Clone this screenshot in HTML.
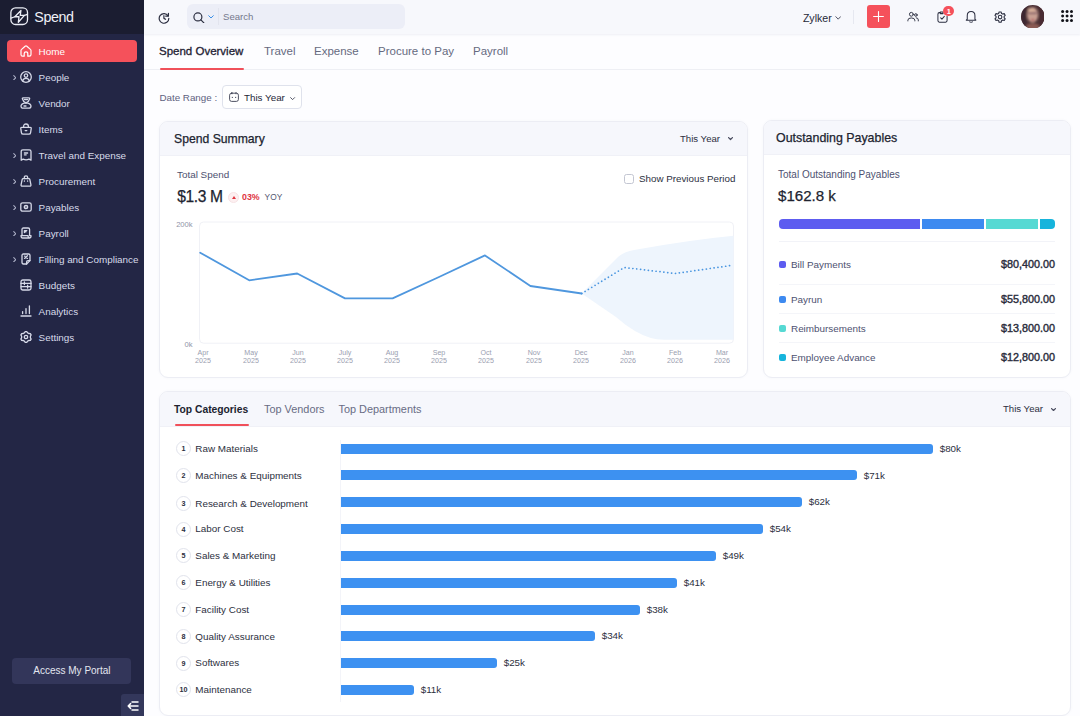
<!DOCTYPE html>
<html lang="en"><head><meta charset="utf-8"><title>Spend</title>
<style>
*{box-sizing:border-box;margin:0;padding:0}
html,body{width:1080px;height:716px;overflow:hidden;background:#fdfdff;font-family:"Liberation Sans",sans-serif;color:#2a2d3e}
.abs{position:absolute}
#side{position:absolute;left:0;top:0;width:144px;height:716px;background:#232645}
#side .hd{position:absolute;left:0;top:0;width:144px;height:33.5px;background:#1b1d31}
#side .brand{position:absolute;left:34.3px;top:8.4px;font-size:14.3px;letter-spacing:-0.45px;color:#f0f1f7;line-height:19px}
.nav{position:absolute;left:7px;width:130px;height:22px;border-radius:4px;color:#d8dbea;font-size:9.9px;line-height:22px}
.nav.act{background:#f5515b;color:#fff}
.nav span{position:absolute;left:31.6px;top:1.1px;white-space:nowrap}
.nav svg.ic{position:absolute;left:13px;top:5px;width:12px;height:12px}
.nav svg.ch{position:absolute;left:5.8px;top:8.8px;width:3.6px;height:5.4px}
#portal{position:absolute;left:12.4px;top:657.7px;width:119px;height:26px;border-radius:4px;background:#33365a;color:#e4e6f0;font-size:10px;line-height:26px;text-align:center}
#collapse{position:absolute;left:121px;top:694px;width:23px;height:22px;background:#33375b;border-top-left-radius:3px}
#top{position:absolute;left:144px;top:0;width:936px;height:34px;background:#f7f8fc;box-shadow:0 1px 2px rgba(40,50,110,0.07);z-index:2}
#search{position:absolute;left:43px;top:4px;width:218px;height:25px;border-radius:6px;background:#eceef7}
#tabs{position:absolute;left:144px;top:34px;width:936px;height:36px;background:#fdfdff;border-bottom:1px solid #eeeff4}
.tab{position:absolute;top:10px;font-size:11.5px;line-height:14px;color:#666a80;white-space:nowrap}
.tab.on{color:#1f2233;-webkit-text-stroke:0.3px #1f2233}
.card{position:absolute;background:#fff;border:1px solid #ecedf4;border-radius:9px;overflow:hidden;box-shadow:0 0 3px rgba(60,70,120,0.04)}
.card .ch{position:absolute;left:0;top:0;right:0;background:#f6f7fc;border-bottom:1px solid #f0f1f7}
.t{position:absolute;white-space:nowrap}
</style></head><body>
<div id="side"><div class="hd"></div>
<svg class="abs" style="left:10.3px;top:7.4px;width:18.4px;height:18.4px" viewBox="0 0 19 19" fill="none" stroke="#eceef6" stroke-width="1.35" stroke-linejoin="round" stroke-linecap="round"><rect x="0.9" y="0.9" width="17.2" height="17.2" rx="4.8"/><path d="M11.3 3.6 L5 10.1 H9.3 L8.6 15.8 L14.9 8.7 H10.6 Z"/><path d="M1 11.5 L5 10.1 M14.9 8.7 L18 7.6" stroke-width="1.2"/></svg>
<div class="brand">Spend</div>
<div class="nav act" style="top:40px"><svg class="ic" viewBox="0 0 12 12" fill="none" stroke="#fff" stroke-width="1.2" stroke-linejoin="round" stroke-linecap="round"><path d="M1 5.6 Q1 4.9 1.6 4.4 L5.1 1.3 Q6 0.6 6.9 1.3 L10.4 4.4 Q11 4.9 11 5.6 V9.6 Q11 11.2 9.4 11.2 H7.8 V8.4 Q7.8 6.8 6 6.8 Q4.2 6.8 4.2 8.4 V11.2 H2.6 Q1 11.2 1 9.6 Z"/></svg><span>Home</span></div>
<div class="nav" style="top:66px"><svg class="ch" viewBox="0 0 5 8" fill="none" stroke="#aeb2c8" stroke-width="1.6" stroke-linecap="round" stroke-linejoin="round"><path d="M1 1 L4 4 L1 7"/></svg><svg class="ic" viewBox="0 0 12 12" fill="none" stroke="#d6d9e8" stroke-width="1.3" stroke-linejoin="round" stroke-linecap="round"><circle cx="6" cy="6" r="5.3"/><circle cx="6" cy="4.6" r="1.7"/><path d="M2.6 10 Q3.2 7.4 6 7.4 Q8.8 7.4 9.4 10"/></svg><span>People</span></div>
<div class="nav" style="top:92px"><svg class="ic" viewBox="0 0 12 12" fill="none" stroke="#d6d9e8" stroke-width="1.3" stroke-linejoin="round" stroke-linecap="round"><path d="M3 0.9 H9 Q9.8 0.9 9.6 1.8 Q9 4.6 6 5.8 Q3 4.6 2.4 1.8 Q2.2 0.9 3 0.9 Z"/><path d="M6 5.8 Q11 6.4 11 9 Q11 11.2 8.6 11.2 H3.4 Q1 11.2 1 9 Q1 6.4 6 5.8 Z"/><path d="M4.4 2.6 H7.6 M4 9 H6"/></svg><span>Vendor</span></div>
<div class="nav" style="top:118px"><svg class="ic" viewBox="0 0 12 12" fill="none" stroke="#d6d9e8" stroke-width="1.3" stroke-linejoin="round" stroke-linecap="round"><path d="M1.8 4.4 H10.2 Q11.4 4.4 11.2 5.6 L10.6 9.6 Q10.4 11.2 8.8 11.2 H3.2 Q1.6 11.2 1.4 9.6 L0.8 5.6 Q0.6 4.4 1.8 4.4 Z"/><path d="M3.6 4.4 V3.4 Q3.6 1 6 1 Q8.4 1 8.4 3.4 V4.4 M5.2 7.6 H6.8"/></svg><span>Items</span></div>
<div class="nav" style="top:144px"><svg class="ch" viewBox="0 0 5 8" fill="none" stroke="#aeb2c8" stroke-width="1.6" stroke-linecap="round" stroke-linejoin="round"><path d="M1 1 L4 4 L1 7"/></svg><svg class="ic" viewBox="0 0 12 12" fill="none" stroke="#d6d9e8" stroke-width="1.3" stroke-linejoin="round" stroke-linecap="round"><path d="M1.2 2.6 Q1.2 0.9 2.9 0.9 H9.3 Q11 0.9 11 2.6 V11.2 L9 10.2 Q6.1 11.4 3.2 10.2 L1.2 11.2 Z"/><path d="M4.4 4 H7.6 M4.4 5.8 H6.2"/></svg><span>Travel and Expense</span></div>
<div class="nav" style="top:170px"><svg class="ch" viewBox="0 0 5 8" fill="none" stroke="#aeb2c8" stroke-width="1.6" stroke-linecap="round" stroke-linejoin="round"><path d="M1 1 L4 4 L1 7"/></svg><svg class="ic" viewBox="0 0 12 12" fill="none" stroke="#d6d9e8" stroke-width="1.3" stroke-linejoin="round" stroke-linecap="round"><path d="M3.2 3.6 H8.8 Q9.6 3.6 9.8 4.4 L10.9 9.6 Q11.2 11.2 9.6 11.2 H2.4 Q0.8 11.2 1.1 9.6 L2.2 4.4 Q2.4 3.6 3.2 3.6 Z"/><path d="M4.3 3.6 V2.6 Q4.3 0.9 6 0.9 Q7.7 0.9 7.7 2.6 V3.6 M4.4 6 V6.2 M7.6 6 V6.2"/></svg><span>Procurement</span></div>
<div class="nav" style="top:196px"><svg class="ch" viewBox="0 0 5 8" fill="none" stroke="#aeb2c8" stroke-width="1.6" stroke-linecap="round" stroke-linejoin="round"><path d="M1 1 L4 4 L1 7"/></svg><svg class="ic" viewBox="0 0 12 12" fill="none" stroke="#d6d9e8" stroke-width="1.3" stroke-linejoin="round" stroke-linecap="round"><rect x="0.8" y="1.8" width="10.4" height="8.4" rx="1.8"/><circle cx="6" cy="6" r="1.7"/><path d="M5.9 6 H6.1"/></svg><span>Payables</span></div>
<div class="nav" style="top:222px"><svg class="ch" viewBox="0 0 5 8" fill="none" stroke="#aeb2c8" stroke-width="1.6" stroke-linecap="round" stroke-linejoin="round"><path d="M1 1 L4 4 L1 7"/></svg><svg class="ic" viewBox="0 0 12 12" fill="none" stroke="#d6d9e8" stroke-width="1.3" stroke-linejoin="round" stroke-linecap="round"><path d="M2 8.6 V2.4 Q2 1 3.4 1 H8.2 Q9.6 1 9.6 2.4 V8.6"/><path d="M1 8.6 H8 Q8 11 9.6 11 H2.6 Q1 11 1 8.6 Z M9.6 11 Q11 11 11 9.6 V8.6 H9.6"/><path d="M4.4 3.6 H6.8 M4.4 3.6 V5.6 M4.4 4.8 H6"/></svg><span>Payroll</span></div>
<div class="nav" style="top:248px"><svg class="ch" viewBox="0 0 5 8" fill="none" stroke="#aeb2c8" stroke-width="1.6" stroke-linecap="round" stroke-linejoin="round"><path d="M1 1 L4 4 L1 7"/></svg><svg class="ic" viewBox="0 0 12 12" fill="none" stroke="#d6d9e8" stroke-width="1.3" stroke-linejoin="round" stroke-linecap="round"><path d="M2 2.4 Q2 1 3.4 1 H8.6 Q10 1 10 2.4 V7.6 L6.6 11 H3.4 Q2 11 2 9.6 Z"/><path d="M10 7.6 H8 Q6.6 7.6 6.6 9 V11"/><path d="M4.6 5.4 L7.4 2.8 M4.6 3.2 H5 M7 5.4 H7.4"/></svg><span>Filling and Compliance</span></div>
<div class="nav" style="top:274px"><svg class="ic" viewBox="0 0 12 12" fill="none" stroke="#d6d9e8" stroke-width="1.3" stroke-linejoin="round" stroke-linecap="round"><rect x="1" y="1" width="10" height="10" rx="1.8"/><path d="M1 4.4 H11 M1 7.6 H11 M4.4 3 V5.6 M7.6 6.2 V9"/></svg><span>Budgets</span></div>
<div class="nav" style="top:300px"><svg class="ic" viewBox="0 0 12 12" fill="none" stroke="#d6d9e8" stroke-width="1.3" stroke-linejoin="round" stroke-linecap="round"><path d="M1 11 H11 M2.6 8.6 V6.6 M6 8.6 V3.6 M9.4 8.6 V1"/></svg><span>Analytics</span></div>
<div class="nav" style="top:326px"><svg class="ic" viewBox="0 0 12 12" fill="none" stroke="#d6d9e8" stroke-width="1.3" stroke-linejoin="round" stroke-linecap="round"><path d="M5.28 0.55 L6.72 0.55 L7.68 1.93 L8.68 2.51 L10.36 2.65 L11.08 3.90 L10.36 5.43 L10.36 6.57 L11.08 8.10 L10.36 9.35 L8.68 9.49 L7.68 10.07 L6.72 11.45 L5.28 11.45 L4.32 10.07 L3.32 9.49 L1.64 9.35 L0.92 8.10 L1.64 6.57 L1.64 5.43 L0.92 3.90 L1.64 2.65 L3.32 2.51 L4.32 1.93 Z"/><circle cx="6" cy="6" r="1.7"/></svg><span>Settings</span></div>

<div id="portal">Access My Portal</div>
<div id="collapse"><svg class="abs" style="left:6px;top:7px;width:12px;height:10px" viewBox="0 0 12 10" fill="none" stroke="#fff" stroke-width="1.5" stroke-linecap="round" stroke-linejoin="round"><path d="M5 1 H11 M1.5 5 H11 M5 9 H11 M3.6 2.6 L1.2 5 L3.6 7.4" /></svg></div>
</div>
<div id="top">
<svg class="abs" style="left:14px;top:11.5px;width:12px;height:12px" viewBox="0 0 13 13" fill="none" stroke="#2b2e40" stroke-width="1.3" stroke-linecap="round" stroke-linejoin="round"><path d="M10.9 4.2 A5.2 5.2 0 1 0 11.7 6.9"/><path d="M11.3 1.4 V4.4 H8.3"/><path d="M6.4 4 V6.9 L8.2 7.9"/></svg>
<div id="search">
<svg class="abs" style="left:6.2px;top:7.5px;width:11.8px;height:11.8px" viewBox="0 0 13 13" fill="none" stroke="#2b2e40" stroke-width="1.3" stroke-linecap="round"><circle cx="5.4" cy="5.4" r="4.4"/><path d="M8.7 8.7 L12 12"/></svg>
<svg class="abs" style="left:21px;top:11px;width:6px;height:4px" viewBox="0 0 6 4" fill="none" stroke="#3b8fe6" stroke-width="1" stroke-linecap="round" stroke-linejoin="round"><path d="M0.7 0.7 L3 3 L5.3 0.7"/></svg>
<div class="abs" style="left:31px;top:4px;width:1px;height:17px;background:#e2e4ee"></div>
<div class="t" style="left:36px;top:6px;font-size:9.6px;line-height:13px;color:#74788c">Search</div>
</div>
<div class="t" style="left:658.9px;top:11px;font-size:10.6px;line-height:14px;color:#262938">Zylker</div>
<svg class="abs" style="left:691px;top:16.4px;width:6.4px;height:4.4px" viewBox="0 0 7 5" fill="none" stroke="#3a3d50" stroke-width="1" stroke-linecap="round" stroke-linejoin="round"><path d="M0.8 0.8 L3.5 3.6 L6.2 0.8"/></svg>
<div class="abs" style="left:709px;top:10px;width:1px;height:14px;background:#e6e8f0"></div>
<div class="abs" style="left:722.5px;top:5px;width:23px;height:23px;border-radius:3px;background:#f5515b"><svg class="abs" style="left:6px;top:6px;width:11px;height:11px" viewBox="0 0 11 11" stroke="#fff" stroke-width="1.1" stroke-linecap="round"><path d="M5.5 0.6 V10.4 M0.6 5.5 H10.4"/></svg></div>
<svg class="abs" style="left:763px;top:11.3px;width:12.2px;height:11.3px" viewBox="0 0 14 13" fill="none" stroke="#2b2e40" stroke-width="1.1" stroke-linecap="round" stroke-linejoin="round"><circle cx="5" cy="3.8" r="2.2"/><path d="M1 11.4 V10.6 Q1 8 5 8 Q9 8 9 10.6 V11.4"/><circle cx="10.2" cy="4.6" r="1.5"/><path d="M10.6 7.8 Q13 8 13 10.2 V11.4"/></svg>
<svg class="abs" style="left:792.6px;top:11px;width:11px;height:12px" preserveAspectRatio="none" viewBox="0 0 12 12" fill="none" stroke="#2b2e40" stroke-width="1.1" stroke-linecap="round" stroke-linejoin="round"><path d="M3.4 1.6 H2.6 Q1 1.6 1 3.2 V9.6 Q1 11.2 2.6 11.2 H9.4 Q11 11.2 11 9.6 V5.4"/><path d="M3.6 1 H6.6 V2.6 H3.6 Z"/><path d="M4 6.8 L5.4 8.2 L8 5.4"/></svg>
<div class="abs" style="left:799.4px;top:5.6px;width:10.8px;height:10.8px;border-radius:6px;background:#f5515b;color:#fff;font-size:7.5px;line-height:11px;text-align:center;font-weight:bold">1</div>
<svg class="abs" style="left:821.3px;top:10.4px;width:12.2px;height:13.2px" viewBox="0 0 13 14" fill="none" stroke="#2b2e40" stroke-width="1.1" stroke-linecap="round" stroke-linejoin="round"><path d="M2.4 9.8 V6 Q2.4 1.6 6.5 1.6 Q10.6 1.6 10.6 6 V9.8 L11.6 10.8 H1.4 Z"/><path d="M5 12.6 Q6.5 13.4 8 12.6"/></svg>
<svg class="abs" style="left:849.6px;top:10.8px;width:12.2px;height:12.2px" viewBox="0 0 13 13" fill="none" stroke="#2b2e40" stroke-width="1.15" stroke-linejoin="round"><path d="M5.4 1 H7.6 L8 2.6 L9.3 3.3 L10.9 2.8 L12 4.7 L10.8 5.8 V7.2 L12 8.3 L10.9 10.2 L9.3 9.7 L8 10.4 L7.6 12 H5.4 L5 10.4 L3.7 9.7 L2.1 10.2 L1 8.3 L2.2 7.2 V5.8 L1 4.7 L2.1 2.8 L3.7 3.3 L5 2.6 Z"/><circle cx="6.5" cy="6.5" r="1.9"/></svg>
<svg class="abs" style="left:876.8px;top:4.6px;width:23.6px;height:23.6px" viewBox="0 0 24 24"><defs><clipPath id="avc"><circle cx="12" cy="12" r="12"/></clipPath><filter id="avb" x="-20%" y="-20%" width="140%" height="140%"><feGaussianBlur stdDeviation="1.1"/></filter></defs><g clip-path="url(#avc)"><rect width="24" height="24" fill="#4b3035"/><g filter="url(#avb)"><ellipse cx="12" cy="22.5" rx="7" ry="4" fill="#8a5a52"/><ellipse cx="11.8" cy="10" rx="5.6" ry="7.8" fill="#c89f92"/><ellipse cx="10.4" cy="5.4" rx="3.4" ry="2.4" fill="#d6ad98"/><rect x="7.4" y="7.6" width="9" height="1.6" fill="#7a5560"/><ellipse cx="12" cy="15.2" rx="1.9" ry="0.9" fill="#b0565c"/><path d="M0 0 H9 Q4 6 5.4 16 Q6 21 3 24 H0 Z" fill="#3e2830"/><path d="M24 0 H15 Q20 5 18.6 15 Q18 21 21 24 H24 Z" fill="#4a2c30"/></g></g></svg>
<svg class="abs" style="left:917px;top:10.2px;width:12.1px;height:12.1px" viewBox="0 0 12.1 12.1" fill="#101118"><circle cx="1.60" cy="1.60" r="1.5"/><circle cx="6.05" cy="1.60" r="1.5"/><circle cx="10.50" cy="1.60" r="1.5"/><circle cx="1.60" cy="6.05" r="1.5"/><circle cx="6.05" cy="6.05" r="1.5"/><circle cx="10.50" cy="6.05" r="1.5"/><circle cx="1.60" cy="10.50" r="1.5"/><circle cx="6.05" cy="10.50" r="1.5"/><circle cx="10.50" cy="10.50" r="1.5"/></svg>
</div>
<div id="tabs">
<div class="tab on" style="left:15px">Spend Overview</div>
<div class="tab" style="left:120px">Travel</div>
<div class="tab" style="left:170px">Expense</div>
<div class="tab" style="left:234px">Procure to Pay</div>
<div class="tab" style="left:329px">Payroll</div>
<div class="abs" style="left:16px;top:33.6px;width:84px;height:2.4px;background:#f0505a;border-radius:1.2px"></div>
</div>
<div id="main">
<div class="t" style="left:159.4px;top:91px;font-size:9.8px;line-height:13px;color:#5d6180">Date Range :</div>
<div class="abs" style="left:222px;top:85px;width:80px;height:24px;border:1px solid #dfe2ec;border-radius:4px;background:#fff">
<svg class="abs" style="left:6px;top:6px;width:10px;height:10px" viewBox="0 0 10 10" fill="none" stroke="#3a3d50" stroke-width="0.9" stroke-linecap="round"><rect x="0.6" y="1.2" width="8.8" height="8.2" rx="2"/><path d="M3 0.5 V1.8 M7 0.5 V1.8 M3.2 5.4 H3.6 M6.4 5.4 H6.8"/></svg>
<div class="t" style="left:21px;top:4.7px;font-size:9.8px;line-height:14px;color:#262938">This Year</div>
<svg class="abs" style="left:67.4px;top:10.6px;width:5.2px;height:3.5px" viewBox="0 0 6 4" fill="none" stroke="#3a3d50" stroke-width="1" stroke-linecap="round" stroke-linejoin="round"><path d="M0.7 0.7 L3 3 L5.3 0.7"/></svg>
</div>

<div class="card" style="left:159px;top:121px;width:589px;height:256.5px"><div class="ch" style="height:34px"></div>
<div class="t" style="left:14px;top:9px;font-size:12.2px;line-height:16px;color:#20232f;-webkit-text-stroke:0.25px #20232f">Spend Summary</div>
<div class="t" style="left:520px;top:10px;font-size:9.6px;line-height:14px;color:#2c2f40">This Year</div>
<svg class="abs" style="left:567.6px;top:15.2px;width:5px;height:3.4px" viewBox="0 0 6 4" fill="none" stroke="#4a4d60" stroke-width="1.5" stroke-linecap="round" stroke-linejoin="round"><path d="M0.7 0.7 L3 3 L5.3 0.7"/></svg>
<div class="t" style="left:17px;top:46px;font-size:9.9px;line-height:13px;color:#4d5170">Total Spend</div>
<div class="t" style="left:17.2px;top:65px;font-size:15.6px;line-height:20px;color:#20232f;letter-spacing:-0.35px;-webkit-text-stroke:0.25px #20232f">$1.3 M</div>
<div class="abs" style="left:68px;top:69.6px;width:11px;height:11px;border-radius:6px;background:#fdf0f1;border:0.5px solid #f7e3e5"></div>
<div class="abs" style="left:71.5px;top:73.6px;width:0;height:0;border-left:2px solid transparent;border-right:2px solid transparent;border-bottom:3.2px solid #e0353f"></div>
<div class="t" style="left:82px;top:68.6px;font-size:8.8px;line-height:13px;color:#e0353f;font-weight:bold">03%</div>
<div class="t" style="left:104.6px;top:68.6px;font-size:8.4px;line-height:13px;color:#555972">YOY</div>
<div class="abs" style="left:464px;top:52px;width:10px;height:10px;border:1px solid #c3c6d2;border-radius:2.5px;background:#fff"></div>
<div class="t" style="left:479px;top:50px;font-size:9.8px;line-height:14px;color:#2c2f40">Show Previous Period</div>
</div>
<svg class="abs" style="left:0;top:0;width:1080px;height:716px;pointer-events:none" viewBox="0 0 1080 716" font-family="Liberation Sans, sans-serif">
<rect x="199.5" y="222" width="534" height="121.2" rx="4" fill="#ffffff" stroke="#f0f1f6" stroke-width="1"/>
<path d="M581.7 293.5 L618 257 Q624 251.5 634 250 Q690 240 733.5 235.8 V339.8 H664 Q650 339.8 635 331 Q625 325 616 317 Z" fill="#eef5fd"/>
<path d="M200.2 252.7 L249.2 280.3 L297.2 273.5 L345.0 298.4 L392.6 298.4 L439.0 277.0 L485.0 255.4 L530.4 286.0 L581.7 293.5" fill="none" stroke="#4f97de" stroke-width="1.8" stroke-linejoin="round" stroke-linecap="round"/>
<path d="M581.7 293.5 L624.3 267.5 L675.3 273.5 L733.0 265.2" fill="none" stroke="#4a96e0" stroke-width="1.7" stroke-dasharray="0.1 3.8" stroke-linecap="round" stroke-linejoin="round"/>
<g font-size="7.6" fill="#9094a8"><text x="192.6" y="226.8" text-anchor="end">200k</text><text x="192.6" y="346.5" text-anchor="end">0k</text>
<g font-size="7.1" fill="#9a9eb0"><text x="203" y="354.8" text-anchor="middle">Apr</text><text x="203" y="362.8" text-anchor="middle">2025</text><text x="251" y="354.8" text-anchor="middle">May</text><text x="251" y="362.8" text-anchor="middle">2025</text><text x="298" y="354.8" text-anchor="middle">Jun</text><text x="298" y="362.8" text-anchor="middle">2025</text><text x="345" y="354.8" text-anchor="middle">July</text><text x="345" y="362.8" text-anchor="middle">2025</text><text x="392" y="354.8" text-anchor="middle">Aug</text><text x="392" y="362.8" text-anchor="middle">2025</text><text x="439" y="354.8" text-anchor="middle">Sep</text><text x="439" y="362.8" text-anchor="middle">2025</text><text x="486" y="354.8" text-anchor="middle">Oct</text><text x="486" y="362.8" text-anchor="middle">2025</text><text x="534" y="354.8" text-anchor="middle">Nov</text><text x="534" y="362.8" text-anchor="middle">2025</text><text x="581" y="354.8" text-anchor="middle">Dec</text><text x="581" y="362.8" text-anchor="middle">2025</text><text x="628" y="354.8" text-anchor="middle">Jan</text><text x="628" y="362.8" text-anchor="middle">2026</text><text x="675" y="354.8" text-anchor="middle">Feb</text><text x="675" y="362.8" text-anchor="middle">2026</text><text x="722" y="354.8" text-anchor="middle">Mar</text><text x="722" y="362.8" text-anchor="middle">2026</text></g></g>
</svg>
<div class="card" style="left:763px;top:120px;width:308px;height:257.5px"><div class="ch" style="height:33.5px"></div>
<div class="t" style="left:12px;top:8.8px;font-size:12.4px;line-height:16px;color:#20232f;-webkit-text-stroke:0.25px #20232f">Outstanding Payables</div>
<div class="t" style="left:14px;top:47px;font-size:10px;line-height:13px;color:#4d5170">Total Outstanding Payables</div>
<div class="t" style="left:14px;top:65px;font-size:15.1px;line-height:20px;color:#20232f;-webkit-text-stroke:0.25px #20232f">$162.8 k</div>
<div class="abs" style="left:15px;top:98px;width:276px;height:10px;border-radius:4px;overflow:hidden;background:#fff">
<div class="abs" style="left:0;top:0;width:141px;height:11px;background:#5d5cf0"></div>
<div class="abs" style="left:143px;top:0;width:62px;height:11px;background:#3d8af0"></div>
<div class="abs" style="left:207px;top:0;width:52px;height:11px;background:#56d9d3"></div>
<div class="abs" style="left:261px;top:0;width:15px;height:11px;background:#16b4dc"></div>
</div>
<div class="abs" style="left:15px;top:120px;width:276px;height:1px;background:#f2f3f8"></div>
<div class="abs" style="left:15px;top:139.8px;width:7px;height:7px;border-radius:2px;background:#5d5cf0"></div><div class="t" style="left:27px;top:136.5px;font-size:9.9px;line-height:14px;color:#4d5170">Bill Payments</div><div class="t" style="right:15px;top:136px;font-size:10.8px;line-height:14px;color:#2a2d3c;-webkit-text-stroke:0.4px #2a2d3c">$80,400.00</div><div class="abs" style="left:15px;top:163px;width:276px;height:1px;background:#f4f5f9"></div><div class="abs" style="left:15px;top:174.8px;width:7px;height:7px;border-radius:2px;background:#3d8af0"></div><div class="t" style="left:27px;top:171.5px;font-size:9.9px;line-height:14px;color:#4d5170">Payrun</div><div class="t" style="right:15px;top:171px;font-size:10.8px;line-height:14px;color:#2a2d3c;-webkit-text-stroke:0.4px #2a2d3c">$55,800.00</div><div class="abs" style="left:15px;top:192px;width:276px;height:1px;background:#f4f5f9"></div><div class="abs" style="left:15px;top:203.8px;width:7px;height:7px;border-radius:2px;background:#56d9d3"></div><div class="t" style="left:27px;top:200.5px;font-size:9.9px;line-height:14px;color:#4d5170">Reimbursements</div><div class="t" style="right:15px;top:200px;font-size:10.8px;line-height:14px;color:#2a2d3c;-webkit-text-stroke:0.4px #2a2d3c">$13,800.00</div><div class="abs" style="left:15px;top:221px;width:276px;height:1px;background:#f4f5f9"></div><div class="abs" style="left:15px;top:232.8px;width:7px;height:7px;border-radius:2px;background:#16b4dc"></div><div class="t" style="left:27px;top:229.5px;font-size:9.9px;line-height:14px;color:#4d5170">Employee Advance</div><div class="t" style="right:15px;top:229px;font-size:10.8px;line-height:14px;color:#2a2d3c;-webkit-text-stroke:0.4px #2a2d3c">$12,800.00</div>
</div>
<div class="card" style="left:159px;top:391px;width:912px;height:325px"><div class="ch" style="height:35px"></div>
<div class="t" style="left:14px;top:11.2px;font-size:10.3px;line-height:14px;color:#20232f;font-weight:bold">Top Categories</div>
<div class="t" style="left:104px;top:10.2px;font-size:10.9px;line-height:14px;color:#686c84">Top Vendors</div>
<div class="t" style="left:178.5px;top:10.2px;font-size:10.9px;line-height:14px;color:#686c84">Top Departments</div>
<div class="abs" style="left:15px;top:32px;width:74px;height:2px;background:#f0505a;border-radius:1px"></div>
<div class="t" style="left:843px;top:10px;font-size:9.6px;line-height:14px;color:#2c2f40">This Year</div>
<svg class="abs" style="left:890.6px;top:15.6px;width:5px;height:3.4px" viewBox="0 0 6 4" fill="none" stroke="#4a4d60" stroke-width="1.5" stroke-linecap="round" stroke-linejoin="round"><path d="M0.7 0.7 L3 3 L5.3 0.7"/></svg>
<div class="abs" style="left:180px;top:48px;width:1px;height:262px;background:#f3f4f9"></div>
<div class="abs" style="left:15.9px;top:49.1px;width:15px;height:15px;border:1px solid #e1e3ec;border-radius:8px;font-size:7.2px;line-height:13px;text-align:center;color:#2c2f40;font-weight:bold">1</div><div class="t" style="left:35.3px;top:49.9px;font-size:9.9px;line-height:14px;color:#2c2f40">Raw Materials</div><div class="abs" style="left:181px;top:51.6px;width:592px;height:10px;background:#3d91f1;border-radius:0 3px 3px 0"></div><div class="t" style="left:779.7px;top:49.7px;font-size:9.8px;line-height:14px;color:#2c2f40">$80k</div><div class="abs" style="left:15.9px;top:76.4px;width:15px;height:15px;border:1px solid #e1e3ec;border-radius:8px;font-size:7.2px;line-height:13px;text-align:center;color:#2c2f40;font-weight:bold">2</div><div class="t" style="left:35.3px;top:77.2px;font-size:9.9px;line-height:14px;color:#2c2f40">Machines & Equipments</div><div class="abs" style="left:181px;top:78.4px;width:516px;height:10px;background:#3d91f1;border-radius:0 3px 3px 0"></div><div class="t" style="left:703.7px;top:76.5px;font-size:9.8px;line-height:14px;color:#2c2f40">$71k</div><div class="abs" style="left:15.9px;top:104.1px;width:15px;height:15px;border:1px solid #e1e3ec;border-radius:8px;font-size:7.2px;line-height:13px;text-align:center;color:#2c2f40;font-weight:bold">3</div><div class="t" style="left:35.3px;top:104.9px;font-size:9.9px;line-height:14px;color:#2c2f40">Research & Development</div><div class="abs" style="left:181px;top:105.2px;width:461px;height:10px;background:#3d91f1;border-radius:0 3px 3px 0"></div><div class="t" style="left:648.7px;top:103.3px;font-size:9.8px;line-height:14px;color:#2c2f40">$62k</div><div class="abs" style="left:15.9px;top:129.5px;width:15px;height:15px;border:1px solid #e1e3ec;border-radius:8px;font-size:7.2px;line-height:13px;text-align:center;color:#2c2f40;font-weight:bold">4</div><div class="t" style="left:35.3px;top:130.3px;font-size:9.9px;line-height:14px;color:#2c2f40">Labor Cost</div><div class="abs" style="left:181px;top:132.1px;width:422px;height:10px;background:#3d91f1;border-radius:0 3px 3px 0"></div><div class="t" style="left:609.7px;top:130.2px;font-size:9.8px;line-height:14px;color:#2c2f40">$54k</div><div class="abs" style="left:15.9px;top:156.4px;width:15px;height:15px;border:1px solid #e1e3ec;border-radius:8px;font-size:7.2px;line-height:13px;text-align:center;color:#2c2f40;font-weight:bold">5</div><div class="t" style="left:35.3px;top:157.2px;font-size:9.9px;line-height:14px;color:#2c2f40">Sales & Marketing</div><div class="abs" style="left:181px;top:158.9px;width:375px;height:10px;background:#3d91f1;border-radius:0 3px 3px 0"></div><div class="t" style="left:562.7px;top:157.0px;font-size:9.8px;line-height:14px;color:#2c2f40">$49k</div><div class="abs" style="left:15.9px;top:183.2px;width:15px;height:15px;border:1px solid #e1e3ec;border-radius:8px;font-size:7.2px;line-height:13px;text-align:center;color:#2c2f40;font-weight:bold">6</div><div class="t" style="left:35.3px;top:184.0px;font-size:9.9px;line-height:14px;color:#2c2f40">Energy & Utilities</div><div class="abs" style="left:181px;top:185.7px;width:336px;height:10px;background:#3d91f1;border-radius:0 3px 3px 0"></div><div class="t" style="left:523.7px;top:183.8px;font-size:9.8px;line-height:14px;color:#2c2f40">$41k</div><div class="abs" style="left:15.9px;top:210.0px;width:15px;height:15px;border:1px solid #e1e3ec;border-radius:8px;font-size:7.2px;line-height:13px;text-align:center;color:#2c2f40;font-weight:bold">7</div><div class="t" style="left:35.3px;top:210.8px;font-size:9.9px;line-height:14px;color:#2c2f40">Facility Cost</div><div class="abs" style="left:181px;top:212.5px;width:299px;height:10px;background:#3d91f1;border-radius:0 3px 3px 0"></div><div class="t" style="left:486.7px;top:210.6px;font-size:9.8px;line-height:14px;color:#2c2f40">$38k</div><div class="abs" style="left:15.9px;top:236.8px;width:15px;height:15px;border:1px solid #e1e3ec;border-radius:8px;font-size:7.2px;line-height:13px;text-align:center;color:#2c2f40;font-weight:bold">8</div><div class="t" style="left:35.3px;top:237.6px;font-size:9.9px;line-height:14px;color:#2c2f40">Quality Assurance</div><div class="abs" style="left:181px;top:239.3px;width:254px;height:10px;background:#3d91f1;border-radius:0 3px 3px 0"></div><div class="t" style="left:441.7px;top:237.4px;font-size:9.8px;line-height:14px;color:#2c2f40">$34k</div><div class="abs" style="left:15.9px;top:263.6px;width:15px;height:15px;border:1px solid #e1e3ec;border-radius:8px;font-size:7.2px;line-height:13px;text-align:center;color:#2c2f40;font-weight:bold">9</div><div class="t" style="left:35.3px;top:264.4px;font-size:9.9px;line-height:14px;color:#2c2f40">Softwares</div><div class="abs" style="left:181px;top:266.2px;width:156px;height:10px;background:#3d91f1;border-radius:0 3px 3px 0"></div><div class="t" style="left:343.7px;top:264.3px;font-size:9.8px;line-height:14px;color:#2c2f40">$25k</div><div class="abs" style="left:15.9px;top:290.4px;width:15px;height:15px;border:1px solid #e1e3ec;border-radius:8px;font-size:7.2px;line-height:13px;text-align:center;color:#2c2f40;font-weight:bold">10</div><div class="t" style="left:35.3px;top:291.2px;font-size:9.9px;line-height:14px;color:#2c2f40">Maintenance</div><div class="abs" style="left:181px;top:293.0px;width:73px;height:10px;background:#3d91f1;border-radius:0 3px 3px 0"></div><div class="t" style="left:260.7px;top:291.1px;font-size:9.8px;line-height:14px;color:#2c2f40">$11k</div></div>
</div>
</body></html>
